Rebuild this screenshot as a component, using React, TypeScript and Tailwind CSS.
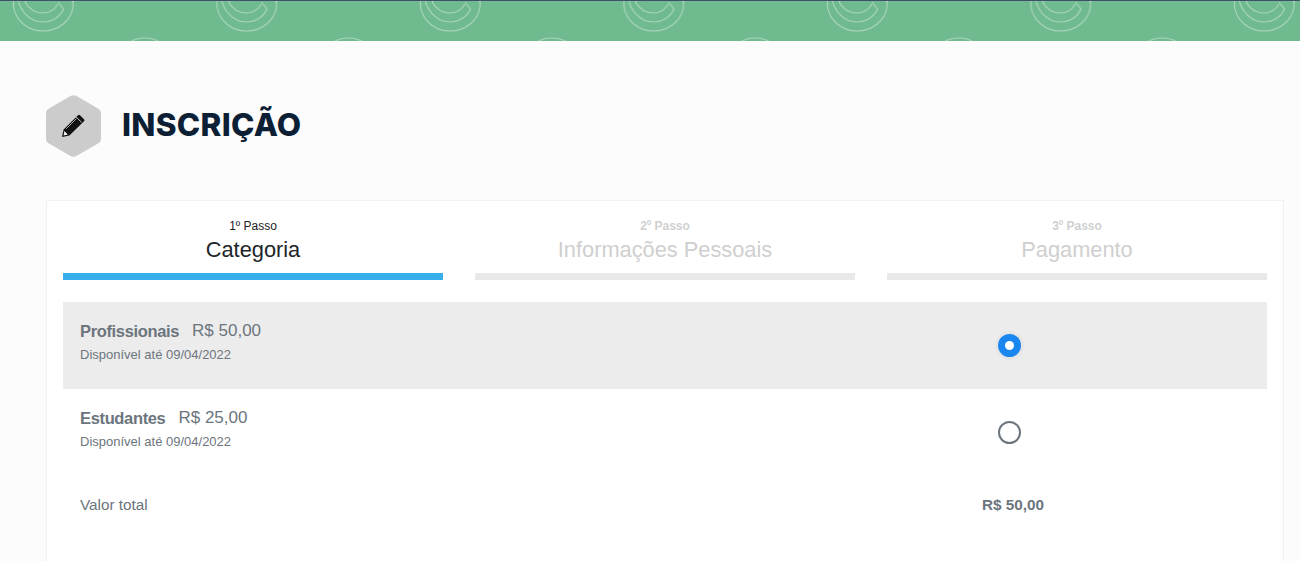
const steps = [
  { label: '1º Passo', title: 'Categoria', active: true },
  { label: '2º Passo', title: 'Informações Pessoais', active: false },
  { label: '3º Passo', title: 'Pagamento', active: false },
];

const options = [
  { name: 'Profissionais', price: 'R$ 50,00', until: 'Disponível até 09/04/2022', selected: true },
  { name: 'Estudantes', price: 'R$ 25,00', until: 'Disponível até 09/04/2022', selected: false },
];

function LogoMark() {
  return (
    <g fill="none" stroke="#ffffff" strokeOpacity="0.4" strokeWidth="1.2">
      <path d="M28 -25 C33 -28 38 -29 43 -29 C48 -29 53 -28 58 -25" />
      <path d="M13.5 -2 L13.5 7 C16 21 28 31 43 31 C58 31 71 21 73 7 L73 -2" />
      <path d="M17 -8 C18 11 30 22 43 22 C52 22 60 17 63.5 9 L58 2" />
      <path d="M25 2 C29 9 36 13 43 13 C50 13 55 9 58 4" />
      <path d="M25 2 L31 -4" />
      <path d="M73 2 L66 -8" />
    </g>
  );
}

function PatternBand() {
  return (
    <div className="relative h-[41px] overflow-hidden border-t border-t-[#3f5068] bg-[#6fba8f]">
      <svg className="absolute inset-0 h-[41px] w-full" aria-hidden="true">
        <defs>
          <pattern id="logos" width="203.5" height="134" patternUnits="userSpaceOnUse" y="-1">
            <LogoMark />
            <g transform="translate(101.75 67)"><LogoMark /></g>
            <g transform="translate(-101.75 67)"><LogoMark /></g>
          </pattern>
        </defs>
        <rect width="100%" height="41" fill="url(#logos)" />
      </svg>
    </div>
  );
}

export default function App() {
  return (
    <div className="h-[561px] overflow-hidden bg-[#fcfcfc] font-['Liberation_Sans',Arial,sans-serif]">
      <PatternBand />

      <div className="flex items-center gap-[21px] pl-[46px] pt-[54px]">
        <svg width="55" height="62" viewBox="0 0 55 62" aria-hidden="true">
          <path
            d="M24.5 1 Q27.5 -0.5 30.5 1 L52 13.5 Q55 15 55 18.5 L55 43.5 Q55 47 52 48.5 L30.5 61 Q27.5 62.5 24.5 61 L3 48.5 Q0 47 0 43.5 L0 18.5 Q0 15 3 13.5 Z"
            fill="#cccccc"
          />
          <g transform="translate(15 18)">
            <path d="M1 24 L2.6 16.6 L17 2.2 Q18 1.2 19 2.2 L23 6.2 Q24 7.2 23 8.2 L8.4 22.4 Z" fill="#111111" />
            <path d="M3.4 18 L6.8 21.4 L2.6 22.4 Z" fill="#f2f2f2" />
            <path d="M5.2 15.8 L15.4 5.6" stroke="#cccccc" strokeWidth="0.8" />
            <path d="M15.4 4.2 L20.6 9.4" stroke="#cccccc" strokeWidth="1" />
          </g>
        </svg>
        <h1 className="-mt-[2px] font-['Inter',sans-serif] text-[31.5px] font-extrabold leading-none tracking-[0.3px] text-[#0c1f35]">
          INSCRIÇÃO
        </h1>
      </div>

      <div className="ml-[46px] mt-[43px] h-[400px] w-[1238px] border border-[#f1f1f1] bg-white px-4 pt-[17px]">
        <div className="grid grid-cols-3 gap-8">
          {steps.map((step) => (
            <div key={step.title} className="text-center">
              <div className={`text-[12px] leading-[17px] ${step.active ? 'text-[#222222]' : 'font-bold text-[#d0d0d0]'}`}>
                {step.label}
              </div>
              <div className={`mt-[1px] text-[21.8px] leading-[28px] ${step.active ? 'text-[#212529]' : 'text-[#cfcfcf]'}`}>
                {step.title}
              </div>
              <div className={`mt-[9px] h-[7px] ${step.active ? 'bg-[#38aeec]' : 'bg-[#e8e8e8]'}`} />
            </div>
          ))}
        </div>

        <div className="mt-[22px]">
          {options.map((opt) => (
            <div key={opt.name} className={`flex h-[87px] items-center pl-[17px] ${opt.selected ? 'bg-[#ececec]' : ''}`}>
              <div className="w-[918px] self-start pt-[17px] text-[#6c757d]">
                <div className="flex gap-[13px] leading-[24px]">
                  <span className="text-[16.5px] font-bold tracking-[-0.35px]">{opt.name}</span>
                  <span className="text-[17px]">{opt.price}</span>
                </div>
                <div className="mt-[4px] text-[13px] leading-[16px]">{opt.until}</div>
              </div>
              {opt.selected ? (
                <span className="flex size-[23px] items-center justify-center rounded-full bg-[#1a86f0] ring-[3px] ring-[#e6e6e6]">
                  <span className="size-[9px] rounded-full bg-white" />
                </span>
              ) : (
                <span className="size-[23px] rounded-full border-2 border-[#6c757d] bg-white" />
              )}
            </div>
          ))}
        </div>

        <div className="flex items-center pl-[17px] pt-[17px] text-[#6c757d]">
          <span className="w-[902px] text-[15.3px] leading-[24px]">Valor total</span>
          <span className="text-[15.3px] font-bold leading-[24px]">R$ 50,00</span>
        </div>
      </div>
    </div>
  );
}
